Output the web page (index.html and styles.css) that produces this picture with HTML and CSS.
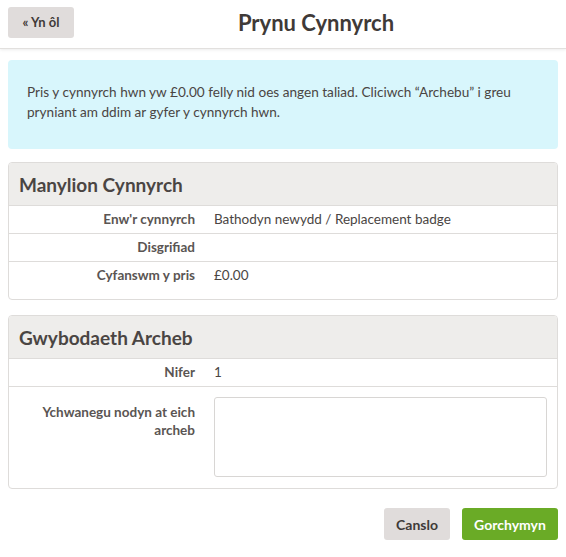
FILE: index.html
```html
<!DOCTYPE html>
<html>
<head>
<meta charset="utf-8">
<link rel="stylesheet" href="styles.css">
</head>
<body>
<header class="topbar">
  <button class="btn btn-back">« Yn ôl</button>
  <h1 class="page-title">Prynu Cynnyrch</h1>
</header>
<main class="content">
  <div class="notice">Pris y cynnyrch hwn yw £0.00 felly nid oes angen taliad. Cliciwch “Archebu” i greu pryniant am ddim ar gyfer y cynnyrch hwn.</div>

  <section class="panel">
    <h2 class="panel-title">Manylion Cynnyrch</h2>
    <div class="row"><div class="label">Enw'r cynnyrch</div><div class="value">Bathodyn newydd / Replacement badge</div></div>
    <div class="row"><div class="label">Disgrifiad</div><div class="value"></div></div>
    <div class="row row-last"><div class="label">Cyfanswm y pris</div><div class="value">£0.00</div></div>
  </section>

  <section class="panel">
    <h2 class="panel-title">Gwybodaeth Archeb</h2>
    <div class="row"><div class="label">Nifer</div><div class="value">1</div></div>
    <div class="row row-note"><div class="label">Ychwanegu nodyn at eich archeb</div><div class="value"><textarea class="note"></textarea></div></div>
  </section>

  <div class="actions">
    <button class="btn btn-cancel">Canslo</button>
    <button class="btn btn-order">Gorchymyn</button>
  </div>
</main>
</body>
</html>
```
FILE: styles.css
```css
* { box-sizing: border-box; }
body {
  margin: 0;
  font-family: Lato, "Open Sans", sans-serif;
  color: #4a4543;
  background: #fff;
}
.topbar {
  height: 49px;
  display: flex;
  align-items: center;
  padding: 0 8px;
  border-bottom: 1px solid #e2e0de;
  box-shadow: 0 1px 3px rgba(0,0,0,0.08);
  position: relative;
}
.btn {
  font-family: inherit;
  border: none;
  border-radius: 3px;
  font-weight: 700;
  cursor: pointer;
}
.btn-back {
  background: #e0dcdb;
  color: #3f3a38;
  font-size: 13px;
  height: 31px;
  width: 66px;
  padding: 0;
  margin-top: -4px;
}
.page-title {
  flex: 1;
  margin: 0 0 0 -66px;
  text-align: center;
  font-size: 22px;
  font-weight: 700;
  color: #3f3a38;
  padding-left: 66px;
  padding-bottom: 4px;
}
.content {
  padding: 11px 8px 0;
}
.notice {
  background: #d8f6fc;
  border-radius: 4px;
  padding: 22px 19px 25px;
  font-size: 13.6px;
  line-height: 20px;
  color: #4a4543;
  height: 89px;
}
.panel {
  margin-top: 13px;
  border: 1px solid #dedcda;
  border-radius: 4px;
  overflow: hidden;
}
.panel + .panel { margin-top: 15px; }
.panel-title {
  margin: 0;
  background: #eeedeb;
  height: 43px;
  padding: 0 10px;
  display: flex;
  align-items: center;
  font-size: 19px;
  font-weight: 700;
  color: #4a4543;
  border-bottom: 1px solid #dedcda;
}
.row {
  display: grid;
  grid-template-columns: 186px 1fr;
  column-gap: 19px;
  min-height: 28px;
  padding: 4px 10px 5px 0;
  font-size: 13.5px;
  line-height: 18px;
  border-bottom: 1px solid #dedcda;
}
.row:last-child { border-bottom: none; }
.row-last { min-height: 37px; }
.label {
  text-align: right;
  font-weight: 700;
  color: #5a5553;
}
.value { color: #4a4543; }
.row-note {
  padding-top: 10px;
  padding-bottom: 10px;
  min-height: 101px;
}
.row-note .label { padding-top: 6px; }
.note {
  display: block;
  width: 333px;
  height: 80px;
  border: 1px solid #d8d6d4;
  border-radius: 3px;
  resize: none;
  font-family: inherit;
}
.actions {
  display: flex;
  justify-content: flex-end;
  gap: 12px;
  margin-top: 19px;
}
.btn-cancel {
  background: #e0dcdb;
  color: #3f3a38;
  height: 32px;
  width: 66px;
  font-size: 14px;
}
.btn-order {
  background: #6aab26;
  color: #fff;
  height: 32px;
  width: 96px;
  font-size: 14px;
}
```
